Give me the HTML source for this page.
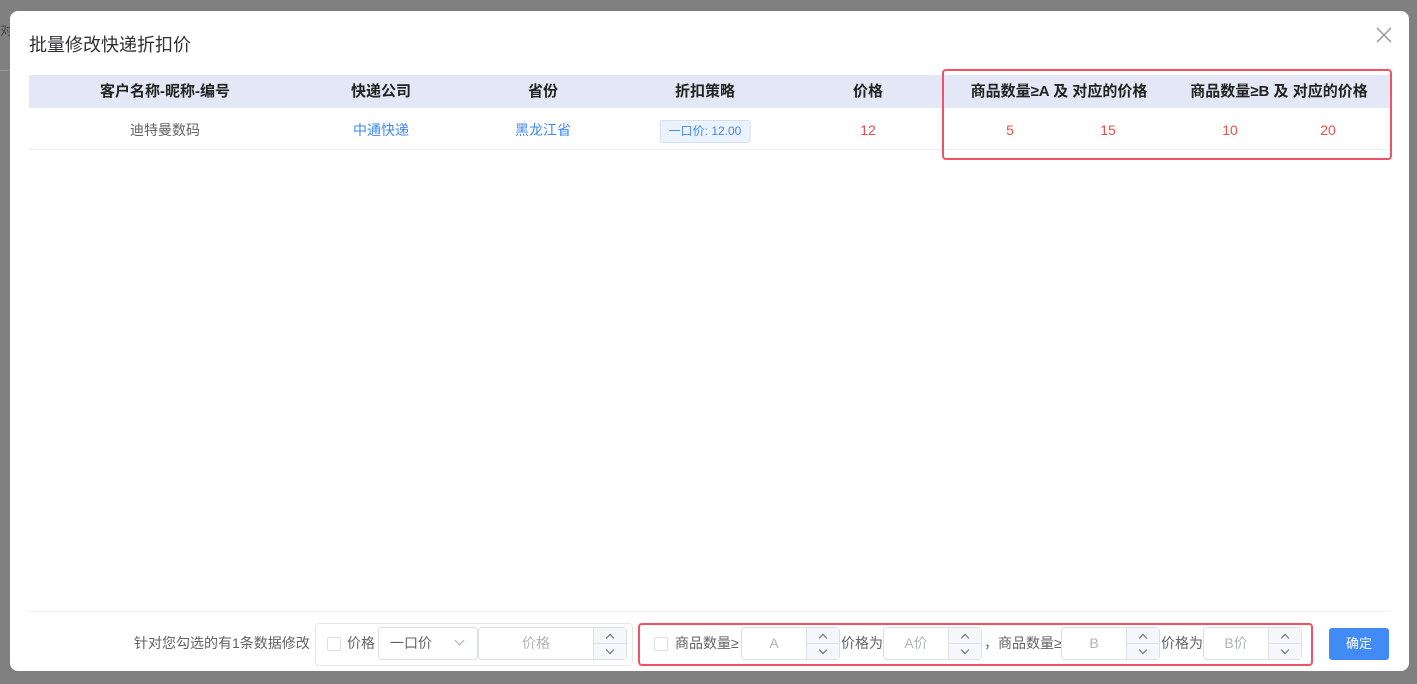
<!DOCTYPE html>
<html><head><meta charset="utf-8"><style>
*{box-sizing:border-box;margin:0;padding:0}
body{width:1417px;height:684px;background:#808080;font-family:"Liberation Sans","Noto Sans CJK SC",sans-serif;position:relative;overflow:hidden;font-size:14px;color:#606266}
.dlg{position:absolute;left:10px;top:11px;width:1399px;height:660px;background:#fff;border-radius:8px}
.a{position:absolute}
.th{position:absolute;top:0;height:33px;line-height:33px;font-weight:bold;color:#222;font-size:15px;transform:translateX(-50%);white-space:nowrap}
.td{position:absolute;top:35px;height:41px;line-height:41px;transform:translateX(-50%);white-space:nowrap;font-size:14px}
.red{color:#f04b4b}.blue{color:#3f88f0}
.inp{position:absolute;top:627px;height:33px;border:1px solid #dcdfe6;border-radius:4px;background:#fff;color:#b0b3b8;font-size:14px;line-height:31px}
.inp .v{position:absolute;left:0;right:33px;text-align:center}
.inp .s{position:absolute;right:0;top:0;bottom:0;width:33px;border-left:1px solid #dcdfe6;background:#f5f7fa}
.inp .s:before{content:"";position:absolute;left:0;right:0;top:15px;border-top:1px solid #dcdfe6}
.inp .s i{position:absolute;left:13px;width:6px;height:6px;border-left:1px solid #666;border-top:1px solid #666}
.cb{position:absolute;top:637px;width:14px;height:14px;border:1px solid #dcdfe6;border-radius:2px;background:#fff}
.lb{position:absolute;top:627px;line-height:33px;color:#606266;font-size:14px;white-space:nowrap}
</style></head><body>
<div class="a" style="left:0;top:70px;width:10px;height:1px;background:#999"></div>
<div class="a" style="left:0;top:20px;color:#444;font-size:13px">对</div>
<div class="dlg">
<div class="a" style="left:19px;top:20px;font-size:18px;color:#303133">批量修改快递折扣价</div>
<svg class="a" style="left:1366px;top:16px" width="16" height="16"><path d="M1 1L15 15M15 1L1 15" stroke="#909399" stroke-width="1.3"/></svg>
<div class="a" style="left:19px;top:64px;width:1361px;height:33px;background:#e4e8f6"></div>
<div class="a" style="left:19px;top:138px;width:1361px;height:1px;background:#ebeef5"></div>
<div class="a" style="left:0;top:64px;width:1399px">
<div class="th" style="left:155px">客户名称-昵称-编号</div>
<div class="th" style="left:371px">快递公司</div>
<div class="th" style="left:533px">省份</div>
<div class="th" style="left:695px">折扣策略</div>
<div class="th" style="left:858px">价格</div>
<div class="th" style="left:1049px">商品数量≥A 及 对应的价格</div>
<div class="th" style="left:1269px">商品数量≥B 及 对应的价格</div>
<div class="td" style="left:155px;color:#606266">迪特曼数码</div>
<div class="td blue" style="left:371px">中通快递</div>
<div class="td blue" style="left:533px">黑龙江省</div>
<div class="td" style="left:695px"><span style="display:inline-block;height:23px;line-height:21px;padding:0 8px;border:1px solid #cfe0fb;background:#ecf3fe;color:#3f88f0;border-radius:3px;font-size:12px">一口价: 12.00</span></div>
<div class="td red" style="left:858px">12</div>
<div class="td red" style="left:1000px">5</div>
<div class="td red" style="left:1098px">15</div>
<div class="td red" style="left:1220px">10</div>
<div class="td red" style="left:1318px">20</div>
</div>
<div class="a" style="left:932px;top:58px;width:450px;height:91px;border:2px solid #f25266;border-radius:4px"></div>
<div class="a" style="left:19px;top:600px;width:1361px;height:1px;background:#ebeef5"></div>
</div>
<div class="lb" style="left:134px">针对您勾选的有1条数据修改</div>
<div class="a" style="left:315px;top:623px;width:318px;height:43px;border:1px solid #e4e7ed;border-radius:4px;background:#fff"></div>
<div class="cb" style="left:327px"></div>
<div class="lb" style="left:347px">价格</div>
<div class="inp" style="left:378px;width:100px;color:#606266"><span style="position:absolute;left:11px">一口价</span><span style="position:absolute;left:77px;top:9px;width:7px;height:7px;border-right:1px solid #aaa;border-bottom:1px solid #aaa;transform:rotate(45deg)"></span></div>
<div class="inp" style="left:478px;width:149px"><span class="v">价格</span><span class="s"><i style="top:7px;transform:rotate(45deg)"></i><i style="top:19px;transform:rotate(225deg)"></i></span></div>
<div class="a" style="left:638px;top:623px;width:675px;height:43px;border:2px solid #f25266;border-radius:4px;background:#fff"></div>
<div class="cb" style="left:654px"></div>
<div class="lb" style="left:675px">商品数量≥</div>
<div class="inp" style="left:741px;width:99px"><span class="v">A</span><span class="s"><i style="top:7px;transform:rotate(45deg)"></i><i style="top:19px;transform:rotate(225deg)"></i></span></div>
<div class="lb" style="left:841px">价格为</div>
<div class="inp" style="left:883px;width:99px"><span class="v">A价</span><span class="s"><i style="top:7px;transform:rotate(45deg)"></i><i style="top:19px;transform:rotate(225deg)"></i></span></div>
<div class="lb" style="left:984px">，商品数量≥</div>
<div class="inp" style="left:1061px;width:99px"><span class="v">B</span><span class="s"><i style="top:7px;transform:rotate(45deg)"></i><i style="top:19px;transform:rotate(225deg)"></i></span></div>
<div class="lb" style="left:1161px">价格为</div>
<div class="inp" style="left:1203px;width:99px"><span class="v">B价</span><span class="s"><i style="top:7px;transform:rotate(45deg)"></i><i style="top:19px;transform:rotate(225deg)"></i></span></div>
<div class="a" style="left:1329px;top:628px;width:60px;height:32px;background:#428bf5;border-radius:3px;color:#fff;text-align:center;line-height:32px;font-size:13px">确定</div>
</body></html>
